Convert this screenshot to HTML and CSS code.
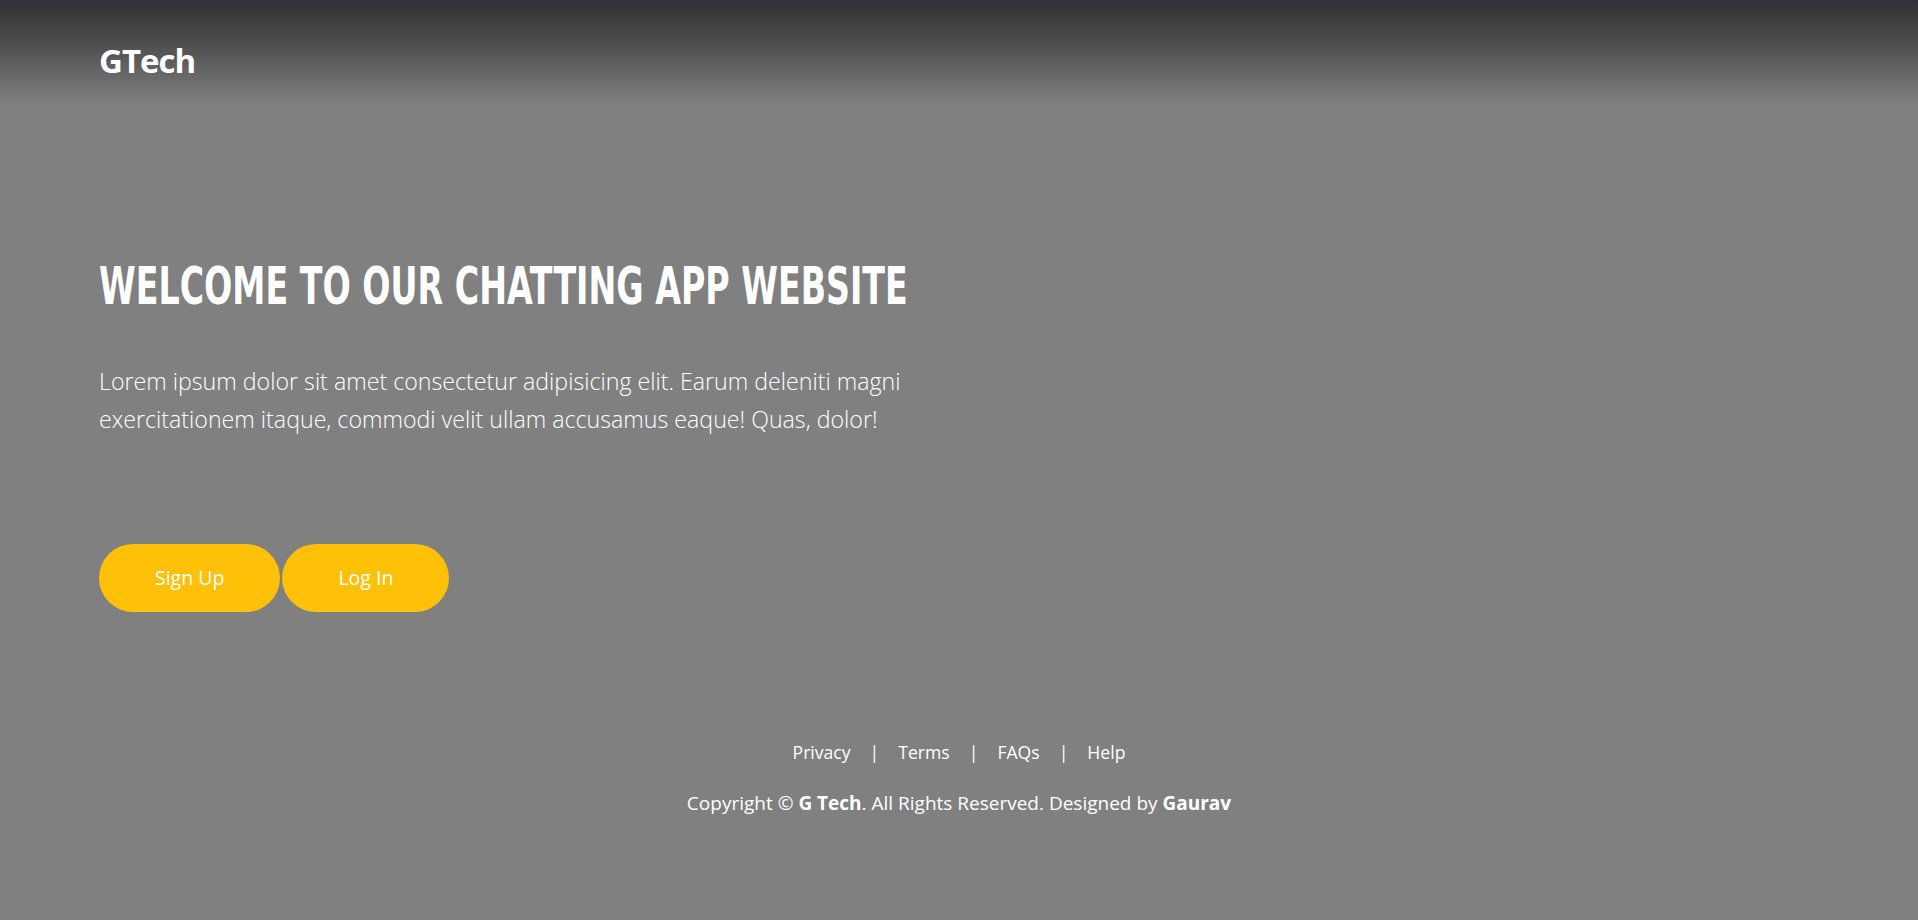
FILE: index.html
```html
<!DOCTYPE html>
<html lang="en">
<head>
<meta charset="utf-8">
<title>GTech</title>
<link rel="stylesheet" href="styles.css">
</head>
<body>
<div class="topline"></div>
<header class="header">
  <div class="logo">GTech</div>
</header>
<main class="hero">
  <h1 class="title">Welcome to our chatting app website</h1>
  <p class="lead">Lorem ipsum dolor sit amet consectetur adipisicing elit. Earum deleniti magni exercitationem itaque, commodi velit ullam accusamus eaque! Quas, dolor!</p>
  <div class="actions">
    <a class="btn" href="#">Sign Up</a>
    <a class="btn" href="#">Log In</a>
  </div>
</main>
<footer class="footer">
  <nav class="links">
    <a href="#">Privacy</a><span class="sep">|</span><a href="#">Terms</a><span class="sep">|</span><a href="#">FAQs</a><span class="sep">|</span><a href="#">Help</a>
  </nav>
  <p class="copy">Copyright © <b>G Tech</b>. All Rights Reserved. Designed by <b>Gaurav</b></p>
</footer>
</body>
</html>
```
FILE: styles.css
```css
html, body {
  margin: 0;
  padding: 0;
}
body {
  background: #808080;
  color: #fff;
  font-family: "Open Sans", "Noto Sans", sans-serif;
  min-height: 920px;
}
.topline {
  height: 3px;
  background: #2f3340;
}
.header {
  height: 102px;
  box-sizing: border-box;
  padding: 41px 99px 0;
  background: linear-gradient(to bottom, #333333 0%, #4a4a4a 35%, #808080 100%);
}
.logo {
  font-size: 33px;
  font-weight: 700;
  line-height: 1;
  letter-spacing: -1px;
}
.hero {
  padding: 0 99px;
}
.title {
  margin: 154px 0 0;
  font-family: "DejaVu Sans Condensed", "DejaVu Sans", sans-serif;
  font-weight: 700;
  font-size: 51px;
  line-height: 56px;
  height: 56px;
  text-transform: uppercase;
  letter-spacing: 0;
  white-space: nowrap;
  transform: scaleX(0.725);
  transform-origin: left center;
}
.lead {
  margin: 47px 0 0;
  max-width: 840px;
  font-size: 23.2px;
  font-weight: 300;
  line-height: 38px;
}
.actions {
  display: flex;
  gap: 2px;
  margin-top: 106px;
}
.btn {
  display: block;
  height: 68px;
  line-height: 68px;
  padding: 0 56px;
  border-radius: 34px;
  background: #ffc107;
  color: #fff;
  font-size: 19.5px;
  text-decoration: none;
}
.footer {
  text-align: center;
  margin-top: 127px;
}
.links {
  font-size: 17.6px;
  line-height: 26px;
}
.links a {
  color: #fff;
  text-decoration: none;
}
.sep {
  margin: 0 19px;
}
.copy {
  margin: 25px 0 0;
  font-size: 19px;
  line-height: 26px;
}
```
